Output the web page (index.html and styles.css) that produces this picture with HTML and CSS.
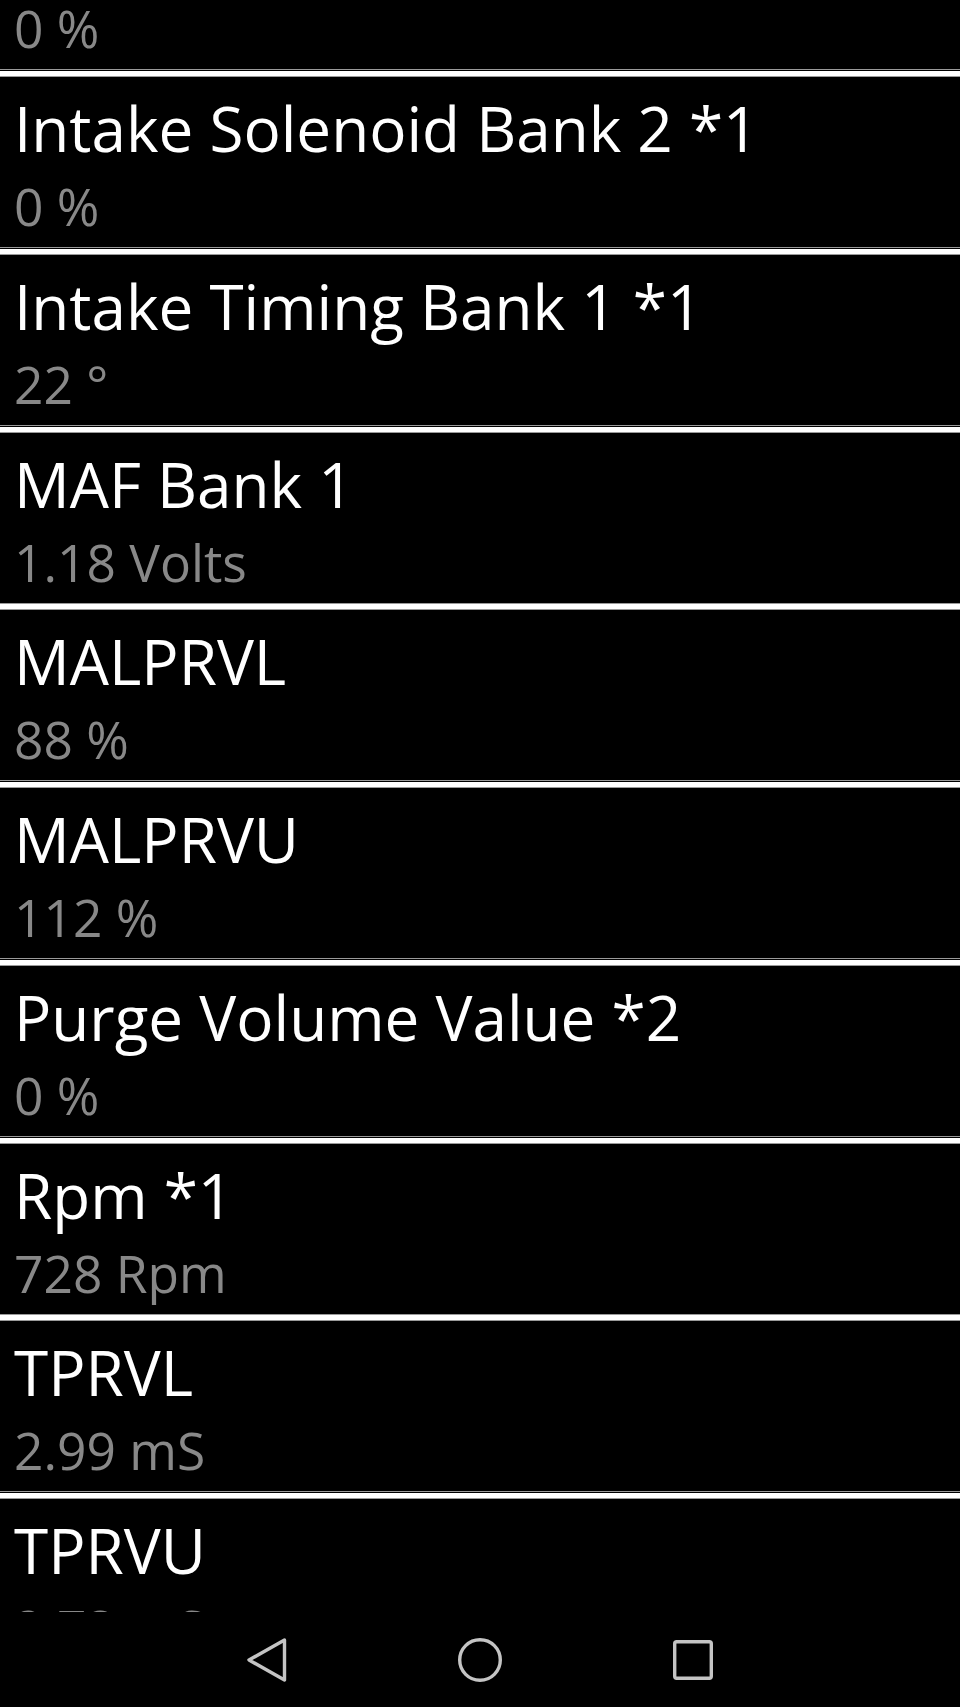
FILE: index.html
```html
<!DOCTYPE html>
<html lang="en">
<head>
  <meta charset="UTF-8" />
  <meta name="viewport" content="width=device-width, initial-scale=1.0" />
  <title>Live Data</title>
  <link rel="stylesheet" href="styles.css">
</head>
<body>
  <div class="screen">
    <div class="list-viewport">
      <ul class="sensor-list">
        <li class="sensor">
          <div class="sensor-name">Intake Solenoid Bank 1 *1</div>
          <div class="sensor-value">0 %</div>
        </li>
        <li class="sensor">
          <div class="sensor-name">Intake Solenoid Bank 2 *1</div>
          <div class="sensor-value">0 %</div>
        </li>
        <li class="sensor">
          <div class="sensor-name">Intake Timing Bank 1 *1</div>
          <div class="sensor-value">22 °</div>
        </li>
        <li class="sensor">
          <div class="sensor-name">MAF Bank 1</div>
          <div class="sensor-value">1.18 Volts</div>
        </li>
        <li class="sensor">
          <div class="sensor-name">MALPRVL</div>
          <div class="sensor-value">88 %</div>
        </li>
        <li class="sensor">
          <div class="sensor-name">MALPRVU</div>
          <div class="sensor-value">112 %</div>
        </li>
        <li class="sensor">
          <div class="sensor-name">Purge Volume Value *2</div>
          <div class="sensor-value">0 %</div>
        </li>
        <li class="sensor">
          <div class="sensor-name">Rpm *1</div>
          <div class="sensor-value">728 Rpm</div>
        </li>
        <li class="sensor">
          <div class="sensor-name">TPRVL</div>
          <div class="sensor-value">2.99 mS</div>
        </li>
        <li class="sensor">
          <div class="sensor-name">TPRVU</div>
          <div class="sensor-value">2.73 mS</div>
        </li>
      </ul>
    </div>

    <div class="navbar">
      <div class="nav-btn">
        <svg width="46" height="48" viewBox="0 0 46 48">
          <path d="M40.5 4 L5 24 L40.5 44 Z" fill="none" stroke="currentColor" stroke-width="3.4" stroke-linejoin="round"/>
        </svg>
      </div>
      <div class="nav-btn">
        <svg width="48" height="48" viewBox="0 0 48 48">
          <circle cx="24" cy="24" r="20.3" fill="none" stroke="currentColor" stroke-width="3.4"/>
        </svg>
      </div>
      <div class="nav-btn">
        <svg width="44" height="44" viewBox="0 0 44 44">
          <rect x="3.7" y="3.7" width="36.6" height="36.6" rx="2" fill="none" stroke="currentColor" stroke-width="3.4"/>
        </svg>
      </div>
    </div>
  </div>
</body>
</html>
```

FILE: styles.css
```css
* {
  box-sizing: border-box;
}

html, body {
  margin: 0;
  padding: 0;
  background: #000;
  font-family: 'Open Sans', 'DejaVu Sans', sans-serif;
}

body {
  overflow: hidden;
}

.screen {
  display: flex;
  flex-direction: column;
  height: 1707px;
}

.list-viewport {
  height: 1612px;
  overflow: hidden;
}

/* list is scrolled, first row mostly off screen */
.sensor-list {
  list-style: none;
  margin: -106.75px 0 0;
  padding: 0;
}

.sensor {
  height: 177px;
  margin-bottom: 0.75px;
  padding: 15px 0 0 14px;
  border-top: 5px solid #fff;
  border-bottom: 1px solid #9a9a9a;
  box-shadow: inset 0 1px 0 #9a9a9a;
}

.sensor-name {
  color: #fff;
  font-size: 62px;
  line-height: 75px;
  white-space: nowrap;
}

.sensor-value {
  color: #888;
  font-size: 51.5px;
  line-height: 81px;
  white-space: nowrap;
}

.navbar {
  flex: 1;
  display: flex;
  align-items: center;
  padding-left: 160px;
  color: #c4c4c4;
}

.nav-btn {
  width: 213px;
  display: flex;
  justify-content: center;
  align-items: center;
}

.nav-btn svg {
  display: block;
}
```
